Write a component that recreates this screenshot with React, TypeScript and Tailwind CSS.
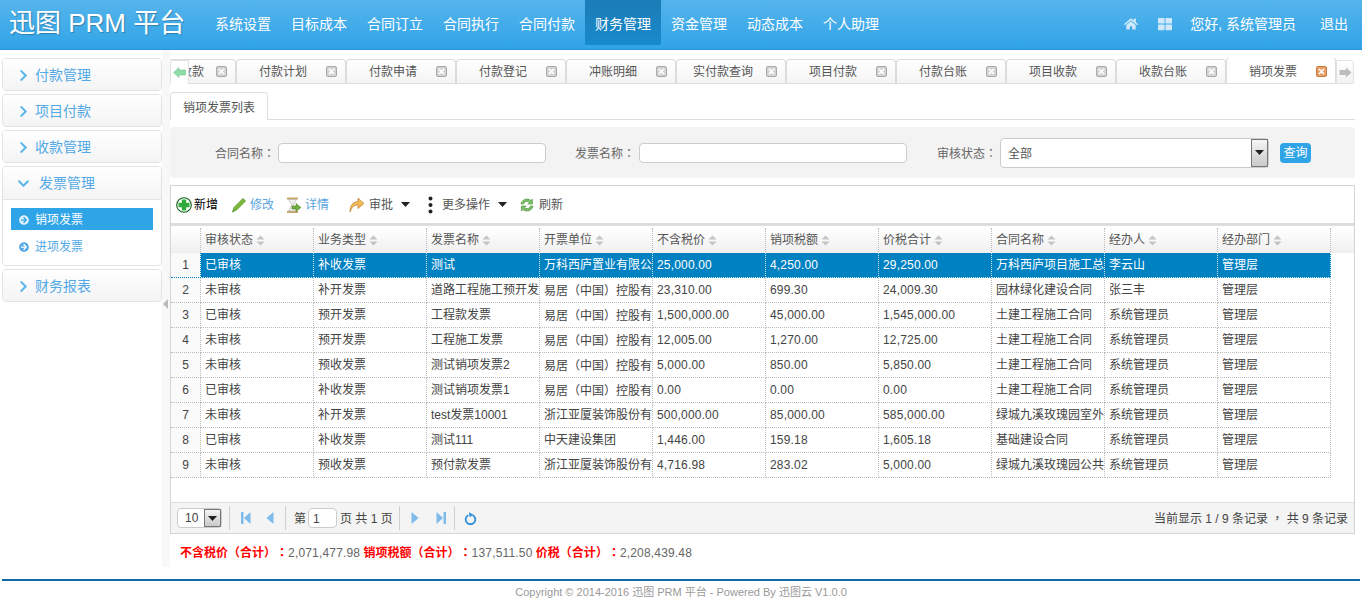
import React from "react";
import { FaHome, FaThLarge, FaChevronRight, FaChevronDown, FaArrowCircleRight } from "react-icons/fa";

const navs = ["系统设置", "目标成本", "合同订立", "合同执行", "合同付款", "财务管理", "资金管理", "动态成本", "个人助理"];
const tabs = ["收款", "付款计划", "付款申请", "付款登记", "冲账明细", "实付款查询", "项目付款", "付款台账", "项目收款", "收款台账"];
const cols = ["审核状态", "业务类型", "发票名称", "开票单位", "不含税价", "销项税额", "价税合计", "合同名称", "经办人", "经办部门"];
const rows = [
  ["已审核", "补收发票", "测试", "万科西庐置业有限公司", "25,000.00", "4,250.00", "29,250.00", "万科西庐项目施工总承包", "李云山", "管理层"],
  ["未审核", "补开发票", "道路工程施工预开发票", "易居（中国）控股有限公司", "23,310.00", "699.30", "24,009.30", "园林绿化建设合同", "张三丰", "管理层"],
  ["已审核", "预开发票", "工程款发票", "易居（中国）控股有限公司", "1,500,000.00", "45,000.00", "1,545,000.00", "土建工程施工合同", "系统管理员", "管理层"],
  ["未审核", "预开发票", "工程施工发票", "易居（中国）控股有限公司", "12,005.00", "1,270.00", "12,725.00", "土建工程施工合同", "系统管理员", "管理层"],
  ["未审核", "预收发票", "测试销项发票2", "易居（中国）控股有限公司", "5,000.00", "850.00", "5,850.00", "土建工程施工合同", "系统管理员", "管理层"],
  ["已审核", "补收发票", "测试销项发票1", "易居（中国）控股有限公司", "0.00", "0.00", "0.00", "土建工程施工合同", "系统管理员", "管理层"],
  ["未审核", "补开发票", "test发票10001", "浙江亚厦装饰股份有限公司", "500,000.00", "85,000.00", "585,000.00", "绿城九溪玫瑰园室外工程", "系统管理员", "管理层"],
  ["已审核", "补收发票", "测试111", "中天建设集团", "1,446.00", "159.18", "1,605.18", "基础建设合同", "系统管理员", "管理层"],
  ["未审核", "预收发票", "预付款发票", "浙江亚厦装饰股份有限公司", "4,716.98", "283.02", "5,000.00", "绿城九溪玫瑰园公共工程", "系统管理员", "管理层"],
];

function P({ t }: { t: string }) {
  return (
    <>
      {t.split(/([（）：，])/).map((s, i) =>
        /[（）：，]/.test(s) ? <span key={i} className="font-['Noto_Sans_CJK_TC',sans-serif]">{s}</span> : s
      )}
    </>
  );
}

function Close({ active }: { active?: boolean }) {
  return (
    <svg width="11" height="11" viewBox="0 0 11 11" className={`ml-[-1px] shrink-0 ${active ? "mt-[-2px]" : ""}`}>
      <rect x="0.5" y="0.5" width="10" height="10" rx="1.5" fill={active ? "#e8a06a" : "#d4d4d4"} stroke={active ? "#c9783f" : "#a8a8a8"} />
      <path d="M3 3l5 5M8 3l-5 5" stroke="#fff" strokeWidth="1.6" />
    </svg>
  );
}

function Sort() {
  return (
    <svg width="9" height="11" viewBox="0 0 9 11" className="ml-[3px] shrink-0">
      <path d="M4.5 0.5L8.5 4.5H0.5Z M4.5 10.5L0.5 6.5H8.5Z" fill="#c4c4c4" />
    </svg>
  );
}

function Caret() {
  return (
    <svg width="9" height="5" viewBox="0 0 9 5" className="shrink-0">
      <path d="M0 0h9L4.5 5Z" fill="#222" />
    </svg>
  );
}

function SideHead({ label, open }: { label: string; open?: boolean }) {
  return (
    <div className={`flex items-center bg-gradient-to-b from-white to-[#f4f4f4] pl-[14px] text-[14px] text-[#53a9e6] ${open ? "h-[33px] border-b border-[#e3e3e3]" : "h-[31px] pt-[1px]"}`}>
      {open ? <FaChevronDown className="mr-[9px] text-[#5cb4ec]" size={13} /> : <FaChevronRight className="mr-[5px] text-[#5cb4ec]" size={13} />}
      <span>{label}</span>
    </div>
  );
}

function SidePanel({ children }: { children: React.ReactNode }) {
  return <div className="overflow-hidden rounded-[4px] border border-[#e3e3e3] bg-white">{children}</div>;
}

function PagerSep() {
  return <div className="h-[24px] w-px bg-[#cfcfcf]" />;
}

export default function App() {
  return (
    <div className="h-[605px] w-[1362px] overflow-hidden bg-white font-['Liberation_Sans','Noto_Sans_CJK_SC',sans-serif] text-[12px] text-[#444] [text-spacing-trim:space-all]">
      <header className="flex h-[50px] items-start border-b border-[#2b8fd3] bg-gradient-to-b from-[#54b4eb] to-[#2fa4e7] text-white">
        <div className="ml-[9px] mt-[5px] w-[196px] text-[26px] leading-[36px] [text-shadow:1px_1px_1px_rgba(0,0,0,0.25)]">迅图 PRM 平台</div>
        <nav className="flex">
          {navs.map((n, i) => (
            <div key={n} className={`flex h-[45px] w-[76px] items-center justify-center pt-[3px] text-[14px] ${i === 5 ? "bg-[#178acc] bg-gradient-to-b from-[#1c7cb6] to-[#178acc]" : ""}`}>{n}</div>
          ))}
        </nav>
        <div className="ml-auto flex h-[45px] items-center pr-[14px] pt-[3px] text-[14px]">
          <FaHome size={14} className="text-[#cfe9fb]" />
          <FaThLarge size={14} className="ml-[20px] text-[#cfe9fb]" />
          <span className="ml-[18px]">您好, 系统管理员</span>
          <span className="ml-[24px]">退出</span>
        </div>
      </header>

      <div className="flex h-[529px]">
        <aside className="ml-[2px] flex w-[160px] shrink-0 flex-col gap-[3px] pt-[8px]">
          <SidePanel><SideHead label="付款管理" /></SidePanel>
          <SidePanel><SideHead label="项目付款" /></SidePanel>
          <SidePanel><SideHead label="收款管理" /></SidePanel>
          <SidePanel>
            <SideHead label="发票管理" open />
            <div className="pb-[3px] pl-[8px] pr-[8px] pt-[8px]">
              <div className="flex h-[22px] items-center bg-[#2fa4e7] pl-[8px] pt-[1px] text-white">
                <FaArrowCircleRight size={10} className="mr-[6px] text-[#d9effc]" />销项发票
              </div>
              <div className="flex h-[32px] items-center pl-[8px] pt-[1px] text-[#53a9e6]">
                <FaArrowCircleRight size={10} className="mr-[6px] text-[#53a9e6]" />进项发票
              </div>
            </div>
          </SidePanel>
          <SidePanel><SideHead label="财务报表" /></SidePanel>
        </aside>

        <div className="mb-[12px] flex w-[8px] shrink-0 items-center bg-[#f8f8f8]">
          <div className="mb-[9px] ml-[1px] h-0 w-0 border-y-[5px] border-r-[5px] border-y-transparent border-r-[#bbb]" />
        </div>

        <main className="w-[1185px] shrink-0 pt-[8px]">
          <div className="relative flex h-[26px] items-end">
            <div className="flex h-[26px] w-[1166px] items-end justify-end overflow-hidden border-b border-[#ddd]">
              {tabs.map((t, i) => (
                <div key={t} className="flex h-[24px] w-[110px] shrink-0 items-center rounded-t-[4px] border border-b-0 border-[#dcdcdc] bg-gradient-to-b from-white to-[#f4f4f4] text-[#555]">
                  {i === 0 ? (
                    <span className="ml-[2px] w-[88px] whitespace-nowrap pr-[13px] text-right">{t}</span>
                  ) : (
                    <span className="ml-[2px] w-[88px] whitespace-nowrap text-center">{t}</span>
                  )}
                  <Close />
                </div>
              ))}
              <div className="relative z-10 -mb-px flex h-[27px] w-[110px] shrink-0 items-center rounded-t-[4px] border border-b-0 border-[#dcdcdc] bg-white pt-[2px] text-[#555]">
                <span className="ml-[2px] w-[88px] text-center">销项发票</span>
                <Close active />
              </div>
            </div>
            <div className="absolute bottom-0 left-0 z-20 flex h-[24px] w-[19px] items-center justify-center rounded-tl-[4px] border border-b-0 border-[#e2e2e2] bg-white">
              <svg width="13" height="11" viewBox="0 0 13 11"><path d="M0.5 5.5L6 0.5V3H12.500V8H6V10.5Z" fill="#8fdca6" stroke="#7ccb94" strokeWidth="0.6" /></svg>
            </div>
            <div className="flex h-[24px] w-[18px] items-center justify-center rounded-tr-[4px] border border-[#e2e2e2] bg-gradient-to-b from-white to-[#f3f3f3]">
              <svg width="13" height="11" viewBox="0 0 13 11"><path d="M12.5 5.5L7 0.5V3H0.5V8H7V10.5Z" fill="#bdbdbd" /></svg>
            </div>
          </div>

          <div className="mt-[8px] flex h-[28px] items-end border-b border-[#ddd]">
            <div className="-mb-px flex h-[28px] w-[98px] items-center justify-center rounded-t-[4px] border border-b-0 border-[#ddd] bg-white pt-[2px] text-[#555]">销项发票列表</div>
          </div>

          <div className="mt-[7px] flex h-[51px] items-center rounded-[4px] bg-[#f3f3f3] text-[#666]">
            <span className="ml-[45px] w-[63px] pt-[2px]"><P t="合同名称：" /></span>
            <div className="h-[20px] w-[268px] rounded-[4px] border border-[#ccc] bg-white" />
            <span className="ml-[29px] w-[64px] pt-[2px]"><P t="发票名称：" /></span>
            <div className="h-[20px] w-[268px] rounded-[4px] border border-[#ccc] bg-white" />
            <span className="ml-[30px] w-[63px] pt-[2px]"><P t="审核状态：" /></span>
            <div className="flex h-[30px] w-[269px] items-center rounded-[4px] border border-[#ccc] bg-white">
              <span className="ml-[7px] pt-[2px] text-[#555]">全部</span>
              <div className="ml-auto flex h-full w-[17px] items-center justify-center border border-[#777] bg-gradient-to-b from-[#f5f5f5] to-[#c9c9c9]"><Caret /></div>
            </div>
            <div className="ml-[11px] flex h-[20px] w-[31px] items-center justify-center rounded-[4px] bg-[#2fa4e7] pt-[1px] text-white">查询</div>
          </div>

          <section className="mt-[7px] flex h-[349px] flex-col border border-[#d4d4d4]">
            <div className="flex h-[40px] shrink-0 items-center border-b-[3px] border-[#ddd] text-[#555]">
              <svg width="16" height="16" viewBox="0 0 16 16" className="ml-[5px]">
                <circle cx="8" cy="8" r="7.300" fill="#fff" stroke="#0e5f1c" strokeWidth="1.100" />
                <path d="M5.800 2.500h4.400v3.300h3.300v4.400h-3.300v3.300H5.800v-3.300H2.500V5.800h3.300Z" fill="#2faa3c" />
              </svg>
              <span className="ml-[2px] text-black">新增</span>
              <svg width="16" height="16" viewBox="0 0 16 16" className="ml-[13px]">
                <path d="M1.5 15L3 10.5L12 1.5L14.5 4L5.5 13Z" fill="#7cbb3a" stroke="#4c8a20" strokeWidth="0.8" />
              </svg>
              <span className="ml-[3px] text-[#5aa5e0]">修改</span>
              <svg width="18" height="18" viewBox="0 0 18 18" className="ml-[10px]">
                <path d="M3 1.5h11v2H3Z M3 15h11v2H3Z" fill="#c9a66b" />
                <path d="M4.5 3.5h8L9 9l3.5 6h-8L8 9Z" fill="#eef0ee" stroke="#aaa" strokeWidth="0.6" />
                <path d="M8 10h4V7.5l5 4-5 4V13H8Z" fill="#6fae3c" stroke="#437a1f" strokeWidth="0.5" />
              </svg>
              <span className="ml-[3px] text-[#5aa5e0]">详情</span>
              <svg width="17" height="17" viewBox="0 0 17 17" className="ml-[19px]">
                <path d="M2 16C2 9 5 6 10 5.5V2l6 5.5-6 5V9C6 9 4 11 2 16Z" fill="#f3b95a" stroke="#b9802c" strokeWidth="0.7" />
              </svg>
              <span className="ml-[4px]">审批</span>
              <span className="ml-[8px]"><Caret /></span>
              <svg width="5" height="18" viewBox="0 0 5 18" className="ml-[18px]">
                <circle cx="2.5" cy="2.5" r="2" fill="#222" /><circle cx="2.5" cy="9" r="2" fill="#222" /><circle cx="2.5" cy="15.5" r="2" fill="#222" />
              </svg>
              <span className="ml-[9px]">更多操作</span>
              <span className="ml-[8px]"><Caret /></span>
              <svg width="16" height="16" viewBox="0 0 16 16" className="ml-[12px]">
                <path d="M2 7C2.5 4 5 2 8 2c1.8 0 3 .7 4 1.6L13.5 2v5H8.8l1.6-1.6C9.6 4.7 8.900 4.400 8 4.400 6.300 4.400 5 5.500 4.500 7Z" fill="#7cc06a" stroke="#4b8f3a" strokeWidth="0.6" />
                <path d="M14 9c-.5 3-3 5-6 5-1.800 0-3-.7-4-1.600L2.500 14V9h4.700l-1.600 1.600c.8.700 1.500 1 2.400 1 1.700 0 3-1.100 3.500-2.600Z" fill="#7cc06a" stroke="#4b8f3a" strokeWidth="0.6" />
              </svg>
              <span className="ml-[4px]">刷新</span>
            </div>

            <div className="mt-[2px] flex h-[24px] shrink-0 bg-gradient-to-b from-white to-[#f0f0f0] text-[#555]">
              <div className="w-[30px] border-r border-dotted border-[#bbb]" />
              {cols.map((c) => (
                <div key={c} className="flex w-[113px] items-center border-r border-dotted border-[#bbb] pl-[4px]">{c}<Sort /></div>
              ))}
            </div>

            <div className="flex-1 border-t border-[#eee]">
              {rows.map((r, i) => (
                <div key={i} className="flex h-[25px]">
                  <div className={`flex w-[30px] items-center justify-center border-b border-r border-dotted bg-[#fafafa] text-[#444] ${i === 0 ? "border-[#0081c2]" : "border-[#bbb]"}`}>{i + 1}</div>
                  {r.map((v, j) => (
                    <div key={j} className={`flex w-[113px] items-center overflow-hidden whitespace-nowrap border-b border-r border-dotted pl-[4px] ${j >= 4 && j <= 6 ? "tracking-[0.17px]" : ""} ${i === 0 ? "border-[#cfe7f5] bg-[#0081c2] text-white" : "border-[#bbb] text-[#444]"}`}><span><P t={v} /></span></div>
                  ))}
                </div>
              ))}
            </div>

            <div className="flex h-[31px] shrink-0 items-center border-t border-[#ddd] bg-[#f4f4f4] text-[#444]">
              <div className="ml-[6px] flex h-[20px] w-[45px] items-center rounded-[4px] border border-[#ccc] bg-white">
                <span className="ml-[7px]">10</span>
                <div className="ml-auto flex h-full w-[17px] items-center justify-center border border-[#777] bg-gradient-to-b from-[#f5f5f5] to-[#c9c9c9]"><Caret /></div>
              </div>
              <div className="ml-[7px]"><PagerSep /></div>
              <svg width="10" height="12" viewBox="0 0 10 12" className="ml-[11px]"><path d="M0 0h2.500v12H0Z M9.500 0v12L3 6Z" fill="#7dbbec" /></svg>
              <svg width="8" height="12" viewBox="0 0 8 12" className="ml-[15px]"><path d="M7.500 0v12L0.500 6Z" fill="#7dbbec" /></svg>
              <div className="ml-[11px]"><PagerSep /></div>
              <span className="ml-[8px] pt-[1px]">第</span>
              <div className="ml-[2px] flex h-[20px] w-[29px] items-center rounded-[4px] border border-[#ccc] bg-white pl-[4px] pt-[1px]">1</div>
              <span className="ml-[3px] whitespace-nowrap pt-[1px]">页 共 1 页</span>
              <div className="ml-[6px]"><PagerSep /></div>
              <svg width="8" height="12" viewBox="0 0 8 12" className="ml-[11px]"><path d="M0.500 0v12L7.500 6Z" fill="#7dbbec" /></svg>
              <svg width="10" height="12" viewBox="0 0 10 12" className="ml-[17px]"><path d="M0.500 0v12L7 6Z M7.500 0H10v12H7.500Z" fill="#7dbbec" /></svg>
              <div className="ml-[8px]"><PagerSep /></div>
              <svg width="13" height="13" viewBox="0 0 13 13" className="ml-[9px]">
                <path d="M4.300 3.200A4.800 4.800 0 1 0 8.700 3.200" fill="none" stroke="#2f8ed8" strokeWidth="1.800" />
                <path d="M5 0.200L9.500 2.700L5.500 5.200Z" fill="#2f8ed8" />
              </svg>
              <span className="ml-auto mr-[6px] pt-[1px]"><P t="当前显示 1 / 9 条记录 ， 共 9 条记录" /></span>
            </div>
          </section>

          <div className="ml-[10px] mt-[11px] leading-[14px] text-[#666]">
            <b className="text-[#f00]"><P t="不含税价（合计）：" /></b><span className="tracking-[0.17px]">2,071,477.98</span> <b className="text-[#f00]"><P t="销项税额（合计）：" /></b><span className="tracking-[0.17px]">137,511.50</span> <b className="text-[#f00]"><P t="价税（合计）：" /></b><span className="tracking-[0.17px]">2,208,439.48</span>
          </div>
        </main>
      </div>

      <footer className="mx-[2px] h-[26px] border-t-2 border-[#0f69a6] pt-[3px] text-center text-[11px] text-[#999]">Copyright © 2014-2016 迅图 PRM 平台 - Powered By 迅图云 V1.0.0</footer>
    </div>
  );
}
